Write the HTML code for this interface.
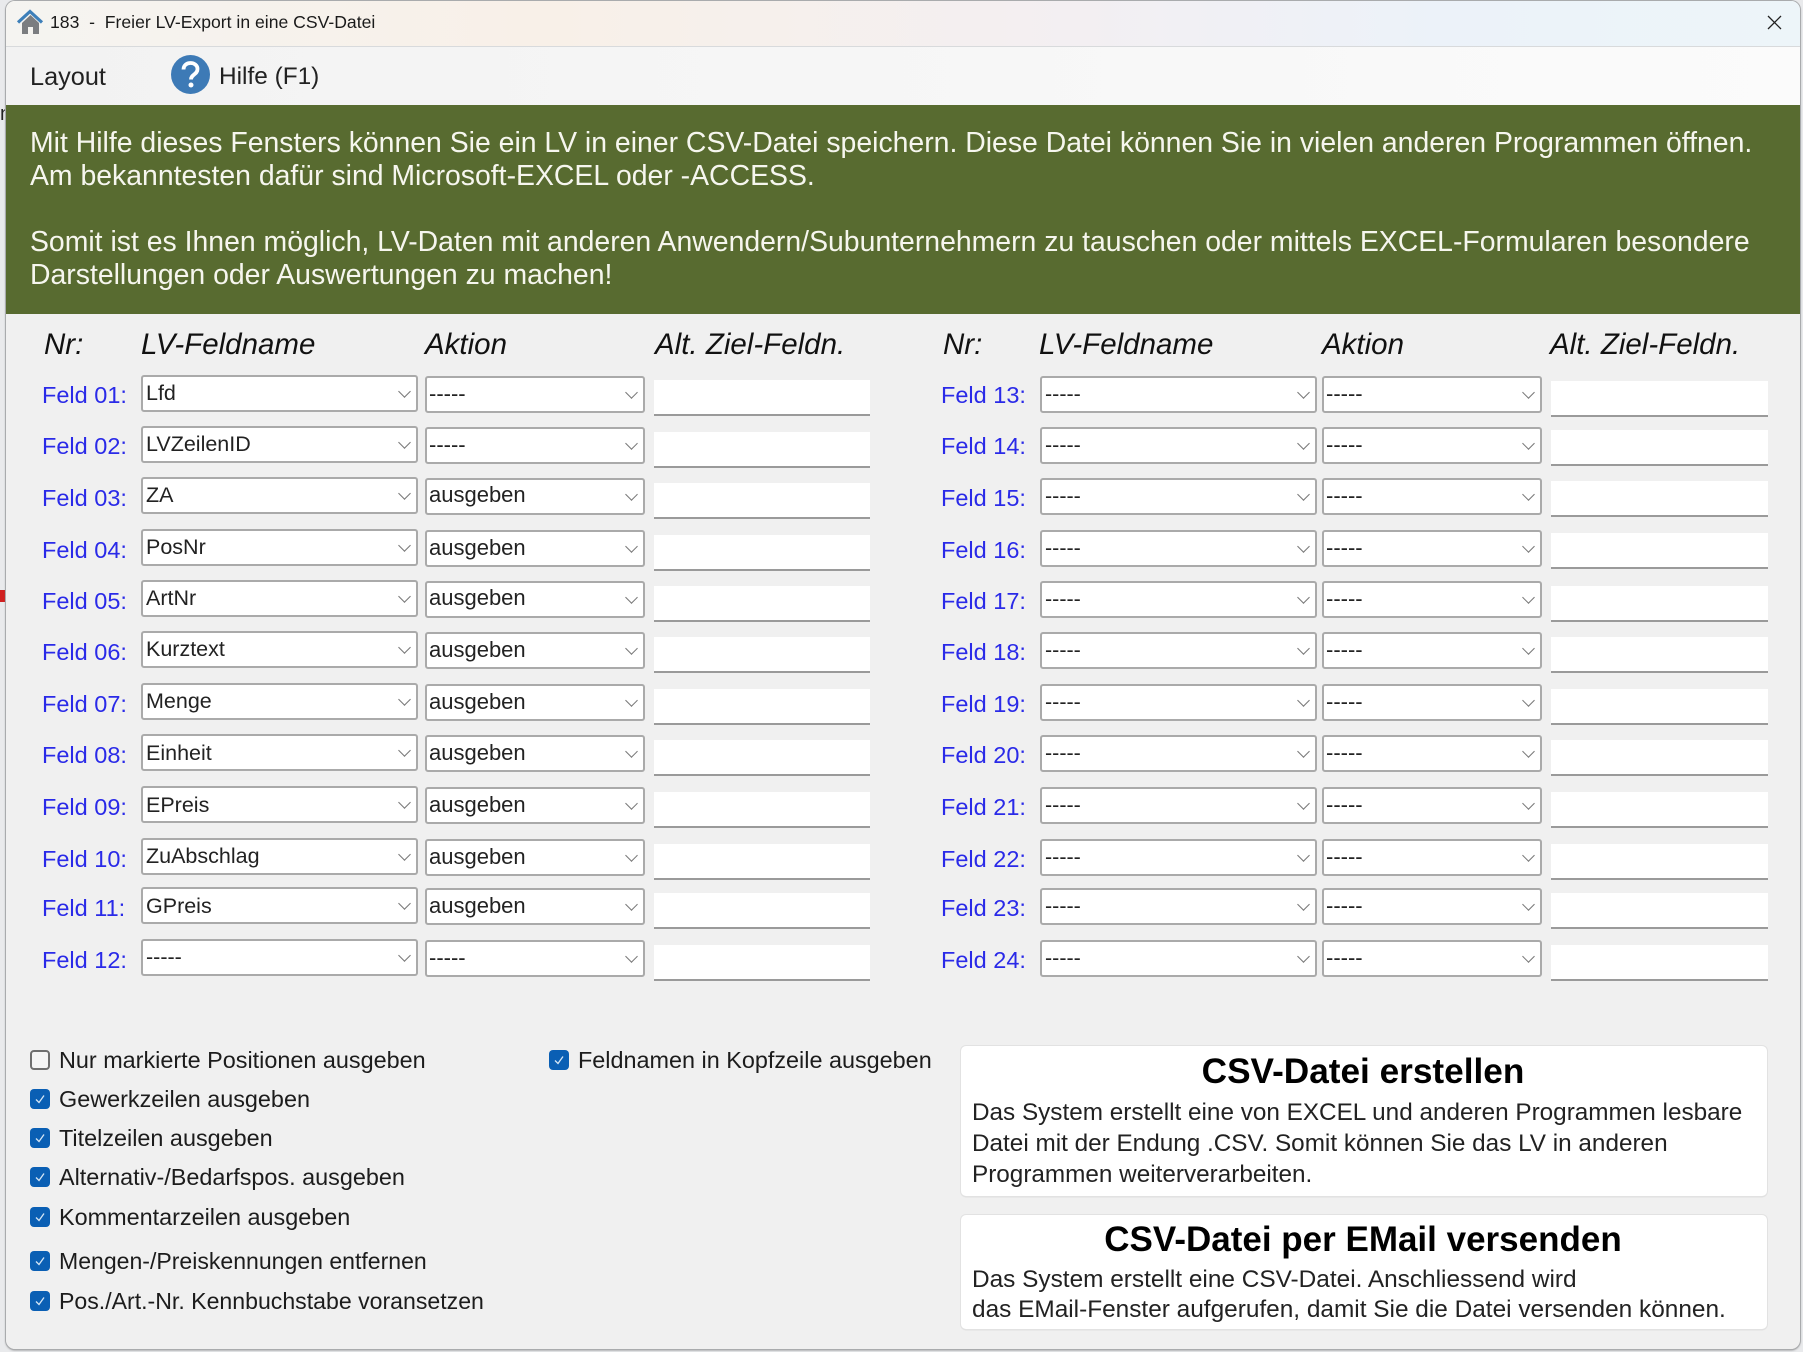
<!DOCTYPE html>
<html lang="de"><head><meta charset="utf-8"><title>183 - Freier LV-Export in eine CSV-Datei</title>
<style>
*{box-sizing:border-box}
html,body{margin:0;padding:0;width:1803px;height:1352px;overflow:hidden;background:#e9eaec;font-family:"Liberation Sans",sans-serif;color:#111}
#frame{position:absolute;left:6px;top:1px;width:1794px;height:1348px;border-radius:9px;box-shadow:0 0 0 1px #a9abad,0 1px 2px #777}
#win{position:absolute;left:5px;top:1px;width:1795px;height:1348px;background:#f0f0f0;clip-path:inset(0 0 0 1px round 9px);overflow:hidden}
#tb{position:absolute;left:0;top:0;width:1795px;height:45px;background:linear-gradient(90deg,#f5f4f1 0,#f8f0e8 30%,#f3eff2 60%,#ecf2f9 80%,#edf5f9 100%)}
#tb span{position:absolute;left:45px;top:9px;font-size:17.6px;line-height:24px;white-space:pre;color:#1a1a1a}
#mb{position:absolute;left:0;top:45px;width:1795px;height:59px;background:linear-gradient(90deg,#f2f2f2,#fbfbfb);border-top:1px solid #d8dadc}
.m{position:absolute;top:60px;line-height:32px;color:#222}
#gr{position:absolute;left:0;top:104px;width:1795px;height:209px;background:#586b30;color:#f6f6ee;font-size:28.4px;line-height:33px;padding:22px 0 0 25px;white-space:pre}
.h{position:absolute;top:328px;font-size:29.5px;line-height:32px;font-style:italic;white-space:pre;color:#111}
.r{position:absolute;left:-5px;width:1803px;height:44px}
.r>div{position:absolute;white-space:pre}
.l{top:5px;font-size:23.5px;line-height:32px;color:#2a2ae8}
.s{height:37px;background:#fff;border:2px solid #aaa;border-radius:3px;font-size:21.500px;line-height:33px;padding-left:3px;color:#222}
.s::after{content:"";position:absolute;width:8px;height:8px;border-right:1.5px solid #777;border-bottom:1.5px solid #777;transform:rotate(45deg);right:7px;top:10px}
.a1,.a2{font-size:22px;line-height:31px}
.n1{left:141px;width:277px;top:0}.a1{left:425px;width:220px;top:1px;padding-left:2px}.i1{left:654px;width:216px;top:6px;height:36px}
.n2{left:1040px;width:277px;top:1px;line-height:32px}.a2{left:1322px;width:220px;top:1px;padding-left:2px}.i2{left:1551px;width:217px;top:6px;height:36px}
.i{background:#fff;border-bottom:2px solid #9a9a9a}
.l1{left:42px}.l2{left:941px}
.c{position:absolute;left:25px;width:20px;height:20px;border-radius:4px;background:#0a5fb4}
.c svg{position:absolute;left:3px;top:3px}
.c.o{background:#f5f5f5;border:2px solid #6f6f6f}
.t{position:absolute;left:54px;font-size:23.4px;line-height:30px;white-space:pre;color:#1c1c1c}
.k{position:absolute;left:956px;width:806px;background:#fff;border-radius:5px;box-shadow:0 0 0 1px #e2e2e2,0 1px 1px #bbb}
.k h2{margin:0;text-align:center;font-size:35.200px;line-height:44px;font-weight:bold;color:#000;position:relative;left:-1px}
.k p{margin:0;position:absolute;left:11px;white-space:pre;color:#222}
</style></head><body>
<div style="position:absolute;left:0;top:104px;font-size:20px;line-height:20px;color:#222">n</div>
<div style="position:absolute;left:0;top:590px;width:5px;height:12px;background:#d02020"></div>
<div id="frame"></div>
<div id="win">
<div id="tb">
<svg style="position:absolute;left:12px;top:8px" width="26" height="26" viewBox="0 0 26 26"><path d="M5 14v11h6v-7h5v7h6V14L13.500 6z" fill="#7b7d80"/><path d="M1 13.500 13 2.500l12 11" fill="none" stroke="#3d7fb9" stroke-width="3.200"/></svg>
<span>183  -  Freier LV-Export in eine CSV-Datei</span>
<svg style="position:absolute;left:1762px;top:14px" width="15" height="15" viewBox="0 0 15 15"><path d="M1 1 14 14M14 1 1 14" stroke="#222" stroke-width="1.300" fill="none"/></svg>
</div>
<div id="mb"></div>
<div class="m" style="left:25px;font-size:25.3px">Layout</div>
<svg style="position:absolute;left:166px;top:54px" width="39" height="39" viewBox="0 0 39 39"><circle cx="19.500" cy="19.500" r="19.500" fill="#3d7ab6"/><path d="M12.500 14.500c0-4 3-6.500 7-6.500s7 2.500 7 6c0 5.500-6.500 5.500-6.500 10.500" fill="none" stroke="#fff" stroke-width="3.800"/><circle cx="20" cy="30" r="2.500" fill="#fff"/></svg>
<div class="m" style="left:214px;font-size:24.4px">Hilfe (F1)</div>
<div id="gr">Mit Hilfe dieses Fensters können Sie ein LV in einer CSV-Datei speichern. Diese Datei können Sie in vielen anderen Programmen öffnen.
Am bekanntesten dafür sind Microsoft-EXCEL oder -ACCESS.

Somit ist es Ihnen möglich, LV-Daten mit anderen Anwendern/Subunternehmern zu tauschen oder mittels EXCEL-Formularen besondere
Darstellungen oder Auswertungen zu machen!</div>
<div class="h" style="left:39px">Nr:</div><div class="h" style="left:136px">LV-Feldname</div><div class="h" style="left:420px">Aktion</div><div class="h" style="left:650px">Alt. Ziel-Feldn.</div>
<div class="h" style="left:938px">Nr:</div><div class="h" style="left:1034px">LV-Feldname</div><div class="h" style="left:1317px">Aktion</div><div class="h" style="left:1545px">Alt. Ziel-Feldn.</div>

<div class="r" style="top:374px"><div class="l l1" style="top:4px">Feld 01:</div><div class="s n1">Lfd</div><div class="s a1">-----</div><div class="i i1" style="top:5px"></div><div class="l l2" style="top:4px">Feld 13:</div><div class="s n2">-----</div><div class="s a2">-----</div><div class="i i2"></div></div>
<div class="r" style="top:425px"><div class="l l1" style="top:4px">Feld 02:</div><div class="s n1">LVZeilenID</div><div class="s a1">-----</div><div class="i i1"></div><div class="l l2" style="top:4px">Feld 14:</div><div class="s n2">-----</div><div class="s a2">-----</div><div class="i i2" style="top:4px"></div></div>
<div class="r" style="top:476px"><div class="l l1">Feld 03:</div><div class="s n1">ZA</div><div class="s a1" style="line-height:30px">ausgeben</div><div class="i i1"></div><div class="l l2">Feld 15:</div><div class="s n2">-----</div><div class="s a2">-----</div><div class="i i2" style="top:4px"></div></div>
<div class="r" style="top:528px"><div class="l l1">Feld 04:</div><div class="s n1">PosNr</div><div class="s a1">ausgeben</div><div class="i i1"></div><div class="l l2">Feld 16:</div><div class="s n2">-----</div><div class="s a2">-----</div><div class="i i2" style="top:4px"></div></div>
<div class="r" style="top:579px"><div class="l l1">Feld 05:</div><div class="s n1">ArtNr</div><div class="s a1" style="line-height:30px">ausgeben</div><div class="i i1"></div><div class="l l2">Feld 17:</div><div class="s n2">-----</div><div class="s a2">-----</div><div class="i i2"></div></div>
<div class="r" style="top:630px"><div class="l l1">Feld 06:</div><div class="s n1">Kurztext</div><div class="s a1">ausgeben</div><div class="i i1"></div><div class="l l2">Feld 18:</div><div class="s n2">-----</div><div class="s a2">-----</div><div class="i i2"></div></div>
<div class="r" style="top:682px"><div class="l l1">Feld 07:</div><div class="s n1">Menge</div><div class="s a1">ausgeben</div><div class="i i1"></div><div class="l l2">Feld 19:</div><div class="s n2">-----</div><div class="s a2">-----</div><div class="i i2"></div></div>
<div class="r" style="top:733px"><div class="l l1">Feld 08:</div><div class="s n1" style="line-height:34px">Einheit</div><div class="s a1" style="line-height:32px">ausgeben</div><div class="i i1"></div><div class="l l2">Feld 20:</div><div class="s n2">-----</div><div class="s a2">-----</div><div class="i i2"></div></div>
<div class="r" style="top:785px"><div class="l l1">Feld 09:</div><div class="s n1" style="line-height:35px">EPreis</div><div class="s a1" style="line-height:32px">ausgeben</div><div class="i i1"></div><div class="l l2">Feld 21:</div><div class="s n2">-----</div><div class="s a2">-----</div><div class="i i2"></div></div>
<div class="r" style="top:837px"><div class="l l1">Feld 10:</div><div class="s n1">ZuAbschlag</div><div class="s a1">ausgeben</div><div class="i i1"></div><div class="l l2">Feld 22:</div><div class="s n2">-----</div><div class="s a2">-----</div><div class="i i2"></div></div>
<div class="r" style="top:886px"><div class="l l1">Feld 11:</div><div class="s n1" style="line-height:34px">GPreis</div><div class="s a1">ausgeben</div><div class="i i1"></div><div class="l l2">Feld 23:</div><div class="s n2">-----</div><div class="s a2">-----</div><div class="i i2"></div></div>
<div class="r" style="top:938px"><div class="l l1">Feld 12:</div><div class="s n1">-----</div><div class="s a1">-----</div><div class="i i1"></div><div class="l l2">Feld 24:</div><div class="s n2">-----</div><div class="s a2">-----</div><div class="i i2"></div></div>

<div class="c o" style="top:1049px"></div><div class="t" style="top:1044px">Nur markierte Positionen ausgeben</div>
<div class="c" style="top:1088px"><svg width="14" height="14" viewBox="0 0 14 14"><path d="M3 7.500 6 10.500 11 3.500" fill="none" stroke="#d5e6f5" stroke-width="1.300"/></svg></div><div class="t" style="top:1083px">Gewerkzeilen ausgeben</div>
<div class="c" style="top:1127px"><svg width="14" height="14" viewBox="0 0 14 14"><path d="M3 7.500 6 10.500 11 3.500" fill="none" stroke="#d5e6f5" stroke-width="1.300"/></svg></div><div class="t" style="top:1122px">Titelzeilen ausgeben</div>
<div class="c" style="top:1166px"><svg width="14" height="14" viewBox="0 0 14 14"><path d="M3 7.500 6 10.500 11 3.500" fill="none" stroke="#d5e6f5" stroke-width="1.300"/></svg></div><div class="t" style="top:1161px">Alternativ-/Bedarfspos. ausgeben</div>
<div class="c" style="top:1206px"><svg width="14" height="14" viewBox="0 0 14 14"><path d="M3 7.500 6 10.500 11 3.500" fill="none" stroke="#d5e6f5" stroke-width="1.300"/></svg></div><div class="t" style="top:1201px">Kommentarzeilen ausgeben</div>
<div class="c" style="top:1250px"><svg width="14" height="14" viewBox="0 0 14 14"><path d="M3 7.500 6 10.500 11 3.500" fill="none" stroke="#d5e6f5" stroke-width="1.300"/></svg></div><div class="t" style="top:1245px;font-size:23.05px">Mengen-/Preiskennungen entfernen</div>
<div class="c" style="top:1290px"><svg width="14" height="14" viewBox="0 0 14 14"><path d="M3 7.500 6 10.500 11 3.500" fill="none" stroke="#d5e6f5" stroke-width="1.300"/></svg></div><div class="t" style="top:1285px;font-size:23.1px">Pos./Art.-Nr. Kennbuchstabe voransetzen</div>
<div class="c" style="left:544px;top:1049px"><svg width="14" height="14" viewBox="0 0 14 14"><path d="M3 7.500 6 10.500 11 3.500" fill="none" stroke="#d5e6f5" stroke-width="1.300"/></svg></div><div class="t" style="left:573px;top:1044px">Feldnamen in Kopfzeile ausgeben</div>

<div class="k" style="top:1045px;height:150px"><h2 style="padding-top:4px">CSV-Datei erstellen</h2><p style="top:51px;line-height:31px;font-size:24.3px">Das System erstellt eine von EXCEL und anderen Programmen lesbare
Datei mit der Endung .CSV. Somit können Sie das LV in anderen
Programmen weiterverarbeiten.</p></div>
<div class="k" style="top:1214px;height:114px"><h2 style="padding-top:3px;font-size:35px">CSV-Datei per EMail versenden</h2><p style="top:50px;line-height:30px;font-size:24.4px">Das System erstellt eine CSV-Datei. Anschliessend wird
das EMail-Fenster aufgerufen, damit Sie die Datei versenden können.</p></div>
</div>
</body></html>
